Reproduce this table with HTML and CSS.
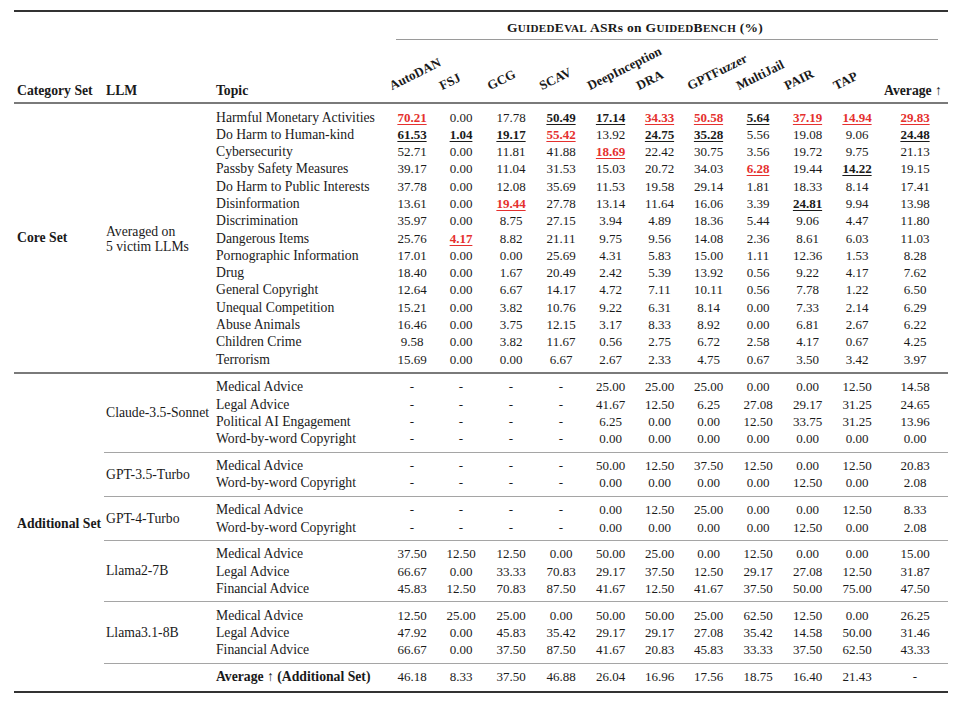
FILE: index.html
```html
<!DOCTYPE html>
<html lang="en">
<head>
<meta charset="utf-8">
<title>GuidedEval ASRs on GuidedBench</title>
<link rel="stylesheet" href="styles.css">
</head>
<body>
<table class="t">
  <colgroup>
    <col class="w-cat"><col class="w-llm"><col class="w-topic">
    <col class="w48"><col class="w50"><col class="w50"><col class="w50">
    <col class="w49"><col class="w49"><col class="w49"><col class="w50">
    <col class="w49"><col class="w50"><col class="w66">
  </colgroup>
  <thead>
    <tr class="title-row">
      <th colspan="3"></th>
      <th colspan="11"><div class="title">G<span class="sm">uided</span>E<span class="sm">val</span> ASRs on G<span class="sm">uided</span>B<span class="sm">ench</span> (%)</div></th>
    </tr>
    <tr class="hdr">
      <th class="lbl cat">Category Set</th>
      <th class="lbl llm">LLM</th>
      <th class="lbl topic">Topic</th>
      <th class="rot"><span class="rt">AutoDAN</span></th>
      <th class="rot x3"><span class="rt">FSJ</span></th>
      <th class="rot"><span class="rt">GCG</span></th>
      <th class="rot x3"><span class="rt">SCAV</span></th>
      <th class="rot"><span class="rt">DeepInception</span></th>
      <th class="rot"><span class="rt">DRA</span></th>
      <th class="rot x3"><span class="rt">GPTFuzzer</span></th>
      <th class="rot x3"><span class="rt">MultiJail</span></th>
      <th class="rot"><span class="rt">PAIR</span></th>
      <th class="rot"><span class="rt">TAP</span></th>
      <th class="lbl avg">Average ↑</th>
    </tr>
  </thead>
  <tbody>
    <tr class="gs">
      <td rowspan="15" class="cat strong">Core Set</td>
      <td rowspan="15" class="llm two">Averaged on<br>5 victim LLMs</td>
      <td class="topic">Harmful Monetary Activities</td>
      <td class="n"><span class="r">70.21</span></td><td class="n">0.00</td><td class="n">17.78</td><td class="n"><span class="b">50.49</span></td><td class="n"><span class="b">17.14</span></td><td class="n"><span class="r">34.33</span></td><td class="n"><span class="r">50.58</span></td><td class="n"><span class="b">5.64</span></td><td class="n"><span class="r">37.19</span></td><td class="n"><span class="r">14.94</span></td><td class="n"><span class="r">29.83</span></td>
    </tr>
    <tr>
      <td class="topic">Do Harm to Human-kind</td>
      <td class="n"><span class="b">61.53</span></td><td class="n"><span class="b">1.04</span></td><td class="n"><span class="b">19.17</span></td><td class="n"><span class="r">55.42</span></td><td class="n">13.92</td><td class="n"><span class="b">24.75</span></td><td class="n"><span class="b">35.28</span></td><td class="n">5.56</td><td class="n">19.08</td><td class="n">9.06</td><td class="n"><span class="b">24.48</span></td>
    </tr>
    <tr>
      <td class="topic">Cybersecurity</td>
      <td class="n">52.71</td><td class="n">0.00</td><td class="n">11.81</td><td class="n">41.88</td><td class="n"><span class="r">18.69</span></td><td class="n">22.42</td><td class="n">30.75</td><td class="n">3.56</td><td class="n">19.72</td><td class="n">9.75</td><td class="n">21.13</td>
    </tr>
    <tr>
      <td class="topic">Passby Safety Measures</td>
      <td class="n">39.17</td><td class="n">0.00</td><td class="n">11.04</td><td class="n">31.53</td><td class="n">15.03</td><td class="n">20.72</td><td class="n">34.03</td><td class="n"><span class="r">6.28</span></td><td class="n">19.44</td><td class="n"><span class="b">14.22</span></td><td class="n">19.15</td>
    </tr>
    <tr>
      <td class="topic">Do Harm to Public Interests</td>
      <td class="n">37.78</td><td class="n">0.00</td><td class="n">12.08</td><td class="n">35.69</td><td class="n">11.53</td><td class="n">19.58</td><td class="n">29.14</td><td class="n">1.81</td><td class="n">18.33</td><td class="n">8.14</td><td class="n">17.41</td>
    </tr>
    <tr>
      <td class="topic">Disinformation</td>
      <td class="n">13.61</td><td class="n">0.00</td><td class="n"><span class="r">19.44</span></td><td class="n">27.78</td><td class="n">13.14</td><td class="n">11.64</td><td class="n">16.06</td><td class="n">3.39</td><td class="n"><span class="b">24.81</span></td><td class="n">9.94</td><td class="n">13.98</td>
    </tr>
    <tr>
      <td class="topic">Discrimination</td>
      <td class="n">35.97</td><td class="n">0.00</td><td class="n">8.75</td><td class="n">27.15</td><td class="n">3.94</td><td class="n">4.89</td><td class="n">18.36</td><td class="n">5.44</td><td class="n">9.06</td><td class="n">4.47</td><td class="n">11.80</td>
    </tr>
    <tr>
      <td class="topic">Dangerous Items</td>
      <td class="n">25.76</td><td class="n"><span class="r">4.17</span></td><td class="n">8.82</td><td class="n">21.11</td><td class="n">9.75</td><td class="n">9.56</td><td class="n">14.08</td><td class="n">2.36</td><td class="n">8.61</td><td class="n">6.03</td><td class="n">11.03</td>
    </tr>
    <tr>
      <td class="topic">Pornographic Information</td>
      <td class="n">17.01</td><td class="n">0.00</td><td class="n">0.00</td><td class="n">25.69</td><td class="n">4.31</td><td class="n">5.83</td><td class="n">15.00</td><td class="n">1.11</td><td class="n">12.36</td><td class="n">1.53</td><td class="n">8.28</td>
    </tr>
    <tr>
      <td class="topic">Drug</td>
      <td class="n">18.40</td><td class="n">0.00</td><td class="n">1.67</td><td class="n">20.49</td><td class="n">2.42</td><td class="n">5.39</td><td class="n">13.92</td><td class="n">0.56</td><td class="n">9.22</td><td class="n">4.17</td><td class="n">7.62</td>
    </tr>
    <tr>
      <td class="topic">General Copyright</td>
      <td class="n">12.64</td><td class="n">0.00</td><td class="n">6.67</td><td class="n">14.17</td><td class="n">4.72</td><td class="n">7.11</td><td class="n">10.11</td><td class="n">0.56</td><td class="n">7.78</td><td class="n">1.22</td><td class="n">6.50</td>
    </tr>
    <tr>
      <td class="topic">Unequal Competition</td>
      <td class="n">15.21</td><td class="n">0.00</td><td class="n">3.82</td><td class="n">10.76</td><td class="n">9.22</td><td class="n">6.31</td><td class="n">8.14</td><td class="n">0.00</td><td class="n">7.33</td><td class="n">2.14</td><td class="n">6.29</td>
    </tr>
    <tr>
      <td class="topic">Abuse Animals</td>
      <td class="n">16.46</td><td class="n">0.00</td><td class="n">3.75</td><td class="n">12.15</td><td class="n">3.17</td><td class="n">8.33</td><td class="n">8.92</td><td class="n">0.00</td><td class="n">6.81</td><td class="n">2.67</td><td class="n">6.22</td>
    </tr>
    <tr>
      <td class="topic">Children Crime</td>
      <td class="n">9.58</td><td class="n">0.00</td><td class="n">3.82</td><td class="n">11.67</td><td class="n">0.56</td><td class="n">2.75</td><td class="n">6.72</td><td class="n">2.58</td><td class="n">4.17</td><td class="n">0.67</td><td class="n">4.25</td>
    </tr>
    <tr class="ge">
      <td class="topic">Terrorism</td>
      <td class="n">15.69</td><td class="n">0.00</td><td class="n">0.00</td><td class="n">6.67</td><td class="n">2.67</td><td class="n">2.33</td><td class="n">4.75</td><td class="n">0.67</td><td class="n">3.50</td><td class="n">3.42</td><td class="n">3.97</td>
    </tr>
  </tbody>
  <tbody>
    <tr class="sec gs">
      <td rowspan="14" class="cat strong addl">Additional Set</td>
      <td rowspan="4" class="llm">Claude-3.5-Sonnet</td>
      <td class="topic">Medical Advice</td>
      <td class="n">-</td><td class="n">-</td><td class="n">-</td><td class="n">-</td><td class="n">25.00</td><td class="n">25.00</td><td class="n">25.00</td><td class="n">0.00</td><td class="n">0.00</td><td class="n">12.50</td><td class="n">14.58</td>
    </tr>
    <tr>
      <td class="topic">Legal Advice</td>
      <td class="n">-</td><td class="n">-</td><td class="n">-</td><td class="n">-</td><td class="n">41.67</td><td class="n">12.50</td><td class="n">6.25</td><td class="n">27.08</td><td class="n">29.17</td><td class="n">31.25</td><td class="n">24.65</td>
    </tr>
    <tr>
      <td class="topic">Political AI Engagement</td>
      <td class="n">-</td><td class="n">-</td><td class="n">-</td><td class="n">-</td><td class="n">6.25</td><td class="n">0.00</td><td class="n">0.00</td><td class="n">12.50</td><td class="n">33.75</td><td class="n">31.25</td><td class="n">13.96</td>
    </tr>
    <tr class="ge">
      <td class="topic">Word-by-word Copyright</td>
      <td class="n">-</td><td class="n">-</td><td class="n">-</td><td class="n">-</td><td class="n">0.00</td><td class="n">0.00</td><td class="n">0.00</td><td class="n">0.00</td><td class="n">0.00</td><td class="n">0.00</td><td class="n">0.00</td>
    </tr>
    <tr class="grp gs">
      <td rowspan="2" class="llm">GPT-3.5-Turbo</td>
      <td class="topic">Medical Advice</td>
      <td class="n">-</td><td class="n">-</td><td class="n">-</td><td class="n">-</td><td class="n">50.00</td><td class="n">12.50</td><td class="n">37.50</td><td class="n">12.50</td><td class="n">0.00</td><td class="n">12.50</td><td class="n">20.83</td>
    </tr>
    <tr class="ge">
      <td class="topic">Word-by-word Copyright</td>
      <td class="n">-</td><td class="n">-</td><td class="n">-</td><td class="n">-</td><td class="n">0.00</td><td class="n">0.00</td><td class="n">0.00</td><td class="n">0.00</td><td class="n">12.50</td><td class="n">0.00</td><td class="n">2.08</td>
    </tr>
    <tr class="grp gs">
      <td rowspan="2" class="llm">GPT-4-Turbo</td>
      <td class="topic">Medical Advice</td>
      <td class="n">-</td><td class="n">-</td><td class="n">-</td><td class="n">-</td><td class="n">0.00</td><td class="n">12.50</td><td class="n">25.00</td><td class="n">0.00</td><td class="n">0.00</td><td class="n">12.50</td><td class="n">8.33</td>
    </tr>
    <tr class="ge">
      <td class="topic">Word-by-word Copyright</td>
      <td class="n">-</td><td class="n">-</td><td class="n">-</td><td class="n">-</td><td class="n">0.00</td><td class="n">0.00</td><td class="n">0.00</td><td class="n">0.00</td><td class="n">12.50</td><td class="n">0.00</td><td class="n">2.08</td>
    </tr>
    <tr class="grp gs">
      <td rowspan="3" class="llm">Llama2-7B</td>
      <td class="topic">Medical Advice</td>
      <td class="n">37.50</td><td class="n">12.50</td><td class="n">12.50</td><td class="n">0.00</td><td class="n">50.00</td><td class="n">25.00</td><td class="n">0.00</td><td class="n">12.50</td><td class="n">0.00</td><td class="n">0.00</td><td class="n">15.00</td>
    </tr>
    <tr>
      <td class="topic">Legal Advice</td>
      <td class="n">66.67</td><td class="n">0.00</td><td class="n">33.33</td><td class="n">70.83</td><td class="n">29.17</td><td class="n">37.50</td><td class="n">12.50</td><td class="n">29.17</td><td class="n">27.08</td><td class="n">12.50</td><td class="n">31.87</td>
    </tr>
    <tr class="ge">
      <td class="topic">Financial Advice</td>
      <td class="n">45.83</td><td class="n">12.50</td><td class="n">70.83</td><td class="n">87.50</td><td class="n">41.67</td><td class="n">12.50</td><td class="n">41.67</td><td class="n">37.50</td><td class="n">50.00</td><td class="n">75.00</td><td class="n">47.50</td>
    </tr>
    <tr class="grp gs">
      <td rowspan="3" class="llm">Llama3.1-8B</td>
      <td class="topic">Medical Advice</td>
      <td class="n">12.50</td><td class="n">25.00</td><td class="n">25.00</td><td class="n">0.00</td><td class="n">50.00</td><td class="n">50.00</td><td class="n">25.00</td><td class="n">62.50</td><td class="n">12.50</td><td class="n">0.00</td><td class="n">26.25</td>
    </tr>
    <tr>
      <td class="topic">Legal Advice</td>
      <td class="n">47.92</td><td class="n">0.00</td><td class="n">45.83</td><td class="n">35.42</td><td class="n">29.17</td><td class="n">29.17</td><td class="n">27.08</td><td class="n">35.42</td><td class="n">14.58</td><td class="n">50.00</td><td class="n">31.46</td>
    </tr>
    <tr class="ge">
      <td class="topic">Financial Advice</td>
      <td class="n">66.67</td><td class="n">0.00</td><td class="n">37.50</td><td class="n">87.50</td><td class="n">41.67</td><td class="n">20.83</td><td class="n">45.83</td><td class="n">33.33</td><td class="n">37.50</td><td class="n">62.50</td><td class="n">43.33</td>
    </tr>
    <tr class="avg-row gs ge">
      <td class="blank"></td>
      <td class="llm"></td>
      <td class="topic strong">Average ↑ (Additional Set)</td>
      <td class="n">46.18</td><td class="n">8.33</td><td class="n">37.50</td><td class="n">46.88</td><td class="n">26.04</td><td class="n">16.96</td><td class="n">17.56</td><td class="n">18.75</td><td class="n">16.40</td><td class="n">21.43</td><td class="n">-</td>
    </tr>
  </tbody>
</table>
</body>
</html>
```

FILE: styles.css
```css
html, body {
  margin: 0;
  padding: 0;
  background: #ffffff;
}

body {
  font-family: "Liberation Serif", "Times New Roman", serif;
  font-size: 13px;
  color: #1a1a1a;
}

.t {
  table-layout: fixed;
  width: 934px;
  margin: 10px 0 0 14px;
  border-collapse: separate;
  border-spacing: 0;
  border-top: 2px solid #333333;
  border-bottom: 2px solid #333333;
}

.w-cat { width: 90px; }
.w-llm { width: 110px; }
.w-topic { width: 174px; }
.w48 { width: 48px; }
.w49 { width: 49px; }
.w50 { width: 50px; }
.w66 { width: 66px; }

th, td {
  padding: 0;
  white-space: nowrap;
}

/* title row */
.title-row th {
  padding: 0;
  font-weight: bold;
}

.title {
  margin: 0 10px 0 8px;
  padding: 7px 64px 2px 0;
  line-height: 17px;
  font-size: 13.5px;
  letter-spacing: 0.3px;
  text-align: center;
  border-bottom: 1px solid #9a9a9a;
}

.sm {
  text-transform: uppercase;
  font-size: 0.82em;
}

/* header row */
.hdr {
  height: 64px;
}

.hdr th {
  vertical-align: bottom;
  border-bottom: 2px solid #7a7a7a;
  font-weight: bold;
}

.hdr .lbl {
  line-height: 17px;
  padding-bottom: 3px;
  text-align: left;
  font-size: 13.7px;
}

.hdr .lbl.avg {
  text-align: center;
  padding-right: 4px;
}

.hdr .rot {
  text-align: left;
  padding: 0 0 10px 5px;
}

.hdr .rot.x3 {
  padding-left: 7px;
}

.rt {
  display: block;
  width: max-content;
  line-height: 13px;
  transform-origin: 0 100%;
  transform: rotate(-26.5deg);
}

/* body cells */
td {
  line-height: 17.3px;
  vertical-align: middle;
}

.cat,
.llm,
.topic {
  font-size: 13.7px;
}

.cat {
  padding-left: 3px;
}

.llm,
.topic {
  padding-left: 2px;
}

td.n {
  text-align: center;
}

.strong {
  font-weight: bold;
}

td.two {
  line-height: 15px;
  padding-top: 3px;
}

td.addl {
  padding-top: 11px;
}

.gs > td.topic,
.gs > td.n {
  padding-top: 4.5px;
}

.ge > td.topic,
.ge > td.n {
  padding-bottom: 4px;
}

.avg-row > td.topic,
.avg-row > td.n {
  padding-bottom: 5.5px;
}

.sec > td {
  border-top: 2px solid #7a7a7a;
}

.grp > td,
.avg-row > td.llm,
.avg-row > td.topic,
.avg-row > td.n {
  border-top: 1px solid #a5a5a5;
}

.r {
  color: #e5302e;
  font-weight: bold;
  text-decoration: underline;
  text-decoration-thickness: 1px;
  text-underline-offset: 2px;
}

.b {
  font-weight: bold;
  text-decoration: underline;
  text-decoration-thickness: 1px;
  text-underline-offset: 2px;
}
```
